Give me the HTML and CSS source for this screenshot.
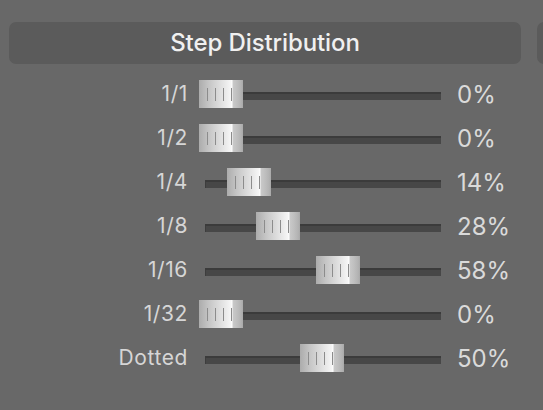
FILE: index.html
```html
<!DOCTYPE html>
<html>
<head>
<meta charset="utf-8">
<link rel="stylesheet" href="styles.css">
</head>
<body>
<div class="panels">
  <section class="panel">
    <div class="header">Step Distribution</div>
    <div class="rows">
      <div class="row"><span class="label">1/1</span><div class="slider"><div class="track"></div><div class="thumb" style="--p:0"><i></i><i></i><i></i><i></i></div></div><span class="value">0%</span></div>
      <div class="row"><span class="label">1/2</span><div class="slider"><div class="track"></div><div class="thumb" style="--p:0"><i></i><i></i><i></i><i></i></div></div><span class="value">0%</span></div>
      <div class="row"><span class="label">1/4</span><div class="slider"><div class="track"></div><div class="thumb" style="--p:14"><i></i><i></i><i></i><i></i></div></div><span class="value">14%</span></div>
      <div class="row"><span class="label">1/8</span><div class="slider"><div class="track"></div><div class="thumb" style="--p:28"><i></i><i></i><i></i><i></i></div></div><span class="value">28%</span></div>
      <div class="row"><span class="label">1/16</span><div class="slider"><div class="track"></div><div class="thumb" style="--p:58"><i></i><i></i><i></i><i></i></div></div><span class="value">58%</span></div>
      <div class="row"><span class="label">1/32</span><div class="slider"><div class="track"></div><div class="thumb" style="--p:0"><i></i><i></i><i></i><i></i></div></div><span class="value">0%</span></div>
      <div class="row"><span class="label">Dotted</span><div class="slider"><div class="track"></div><div class="thumb" style="--p:50"><i></i><i></i><i></i><i></i></div></div><span class="value">50%</span></div>
    </div>
  </section>
  <section class="panel side">
    <div class="header"></div>
  </section>
</div>
</body>
</html>
```

FILE: styles.css
```css
html, body {
  margin: 0;
  padding: 0;
  background: #686868;
  overflow: hidden;
  width: 543px;
  height: 410px;
  font-family: Inter, "Liberation Sans", sans-serif;
}

.panels {
  display: flex;
  gap: 16px;
  padding: 22px 0 0 9px;
  width: 543px;
  box-sizing: border-box;
  overflow: hidden;
}

.panel {
  width: 512px;
  flex: none;
}

.header {
  height: 42px;
  border-radius: 7px;
  background: #5b5b5b;
  color: #f0f0f0;
  font-size: 24px;
  font-weight: 500;
  letter-spacing: -0.1px;
  display: flex;
  align-items: center;
  justify-content: center;
  box-sizing: border-box;
  padding-bottom: 1px;
}

.rows {
  display: flex;
  flex-direction: column;
  gap: 16px;
  margin-top: 16px;
}

.row {
  display: flex;
  align-items: center;
  height: 28px;
}

.label {
  flex: none;
  width: 179px;
  text-align: right;
  color: #d6d6d6;
  font-size: 21px;
  letter-spacing: 0.6px;
  margin-right: 11px;
  margin-top: -2px;
}

.slider {
  position: relative;
  width: 246px;
  height: 28px;
  flex: none;
}

.track {
  margin: 12px 4px 0 6px;
  height: 8px;
  box-sizing: border-box;
  background: #474747;
  border-top: 2px solid #3b3b3b;
  border-left: 1px solid #3d3d3d;
}

.thumb {
  position: absolute;
  top: 0;
  left: calc(var(--p) * 2.02px);
  width: 44px;
  height: 28px;
  background: linear-gradient(to right,
    #acacac 0px, #c6c6c6 10px, #e0e0e0 22px, #f6f6f6 32px, #ffffff 33px,
    #c9c9c9 34px, #bfbfbf 38px, #b3b3b3 42px, #a9a9a9 44px);
  display: flex;
  gap: 7px;
  padding: 8px 0 0 8px;
  box-sizing: border-box;
}

.thumb i {
  display: block;
  width: 1px;
  height: 13px;
  background: #8c8c8c;
}

.value {
  flex: none;
  margin-left: 12px;
  color: #dadada;
  font-size: 24px;
  margin-top: 1px;
}
```
